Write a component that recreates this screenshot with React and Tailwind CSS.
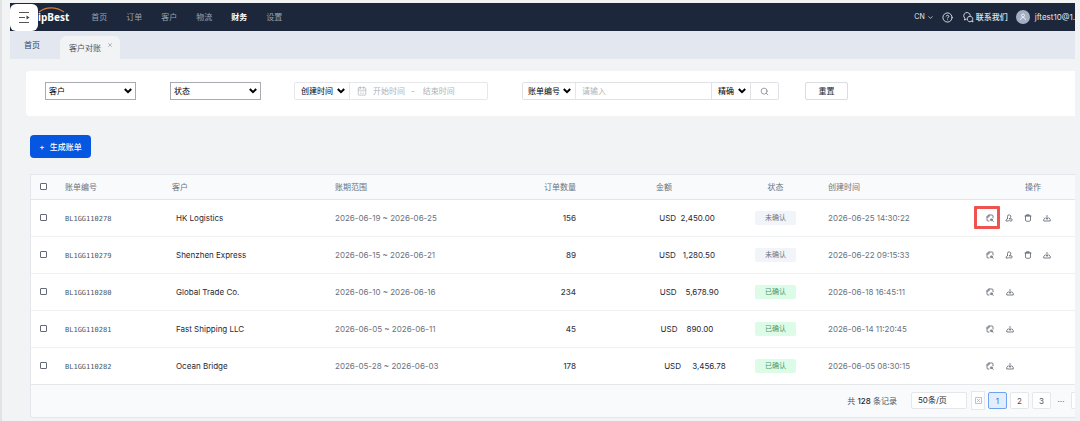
import React from "react";
import { CircleHelp, ChevronDown, Search, CalendarDays, X } from "lucide-react";

const navItems = ["首页", "订单", "客户", "物流", "财务", "设置"];

const rows = [
  { id: "BL1GG110278", customer: "HK Logistics", range: "2026-06-19 ~ 2026-06-25", count: 156, amount: "USD\u00a0\u00a02,450.00", confirmed: false, created: "2026-06-25 14:30:22", marked: true },
  { id: "BL1GG110279", customer: "Shenzhen Express", range: "2026-06-15 ~ 2026-06-21", count: 89, amount: "USD\u00a0\u00a0\u00a01,280.50", confirmed: false, created: "2026-06-22 09:15:33" },
  { id: "BL1GG110280", customer: "Global Trade Co.", range: "2026-06-10 ~ 2026-06-16", count: 234, amount: "\u00a0\u00a0USD\u00a0\u00a0\u00a0\u00a05,678.90", confirmed: true, created: "2026-06-18 16:45:11" },
  { id: "BL1GG110281", customer: "Fast Shipping LLC", range: "2026-06-05 ~ 2026-06-11", count: 45, amount: "USD\u00a0\u00a0\u00a0\u00a0890.00", confirmed: true, created: "2026-06-14 11:20:45" },
  { id: "BL1GG110282", customer: "Ocean Bridge", range: "2026-05-28 ~ 2026-06-03", count: 178, amount: "\u00a0\u00a0\u00a0\u00a0\u00a0\u00a0\u00a0USD\u00a0\u00a0\u00a0\u00a0\u00a03,456.78", confirmed: true, created: "2026-06-05 08:30:15" },
];

function Select({ label, options, className, boxClass = "" }) {
  return (
    <label className={"relative flex items-center " + className}>
      <span className="sr-only">{label}</span>
      <select className={"h-full w-full appearance-none bg-white text-[8px] leading-4 text-black outline-none " + boxClass}>
        {options.map((o) => (
          <option key={o}>{o}</option>
        ))}
      </select>
      <svg className="pointer-events-none absolute right-1 h-[6px] w-2" viewBox="0 0 8 6" fill="none" stroke="#000" strokeWidth="2">
        <path d="M.8 1 4 4.2 7.2 1" />
      </svg>
    </label>
  );
}

function Icon({ children }) {
  return (
    <svg className="size-2" viewBox="0 0 16 16" fill="none" stroke="currentColor" strokeWidth="1.500" strokeLinecap="round" strokeLinejoin="round">
      {children}
    </svg>
  );
}

const icons = {
  查看: (
    <Icon>
      <path d="M6 14H4A2 2 0 0 1 2 12V5L5 2H12A2 2 0 0 1 14 4V8M2 6H6V2" />
      <circle cx="10.500" cy="11.500" r="1.800" />
      <path d="m12.500 13 2 1.500" />
    </Icon>
  ),
  确认: (
    <Icon>
      <path d="M5 9V5a3.300 3.300 0 1 1 6 2L9 9.500M5 9 2 12.500V14h5l2-2M9 9.500h3a2.200 2.200 0 0 1 0 4.500H10" />
    </Icon>
  ),
  删除: (
    <Icon>
      <path d="M5.500 1.500h5v2h-5zM2 4h12M3 4v8a2.500 2.500 0 0 0 2.500 2.500h5A2.500 2.500 0 0 0 13 12V4" />
    </Icon>
  ),
  下载: (
    <Icon>
      <path d="M8 3v7M5.500 8 8 10.500 10.500 8M4 8 1.500 11v3h13v-3L12 8" />
    </Icon>
  ),
};

function Action({ name, marked }) {
  return (
    <button type="button" aria-label={name} className="relative flex size-2 items-center justify-center text-[#4b5563]">
      {icons[name]}
      {marked && <span className="absolute -top-2 -left-3 h-[23px] w-[26px] rounded-[1px] border-3 border-[#ef5350]" />}
    </button>
  );
}

function Check({ label }) {
  return (
    <input
      type="checkbox"
      aria-label={label}
      className="block size-[7px] appearance-none rounded-[1px] border border-[#626875] bg-white checked:bg-blue-600"
    />
  );
}

function PageButton({ children, active }) {
  return (
    <button
      type="button"
      className={
        "flex h-[17px] w-[19px] items-center justify-center rounded-xs border text-[8px] " +
        (active ? "border-[#6ea3f2] bg-[#e3edfd] text-[#2f6fe0]" : "border-[#e5e7eb] bg-white text-[#4b5563]")
      }
    >
      {children}
    </button>
  );
}

export default function App() {
  return (
    <div className="min-h-screen border-l-2 border-[#e1e3e5] bg-[#f1f3f5] pt-[3px] pr-[5px] pb-1 pl-2 font-[Inter,'Noto_Sans_CJK_SC',sans-serif] text-[8px] leading-3 text-[#4b5563]">
      <header className="flex h-7 items-center bg-[#1c273b] text-[#99a1ae]">
        <button type="button" aria-label="菜单" className="z-10 flex h-[27px] w-7 shrink-0 items-center justify-center rounded-md bg-white">
          <svg className="h-[13px] w-3" viewBox="0 0 12 13" fill="none" stroke="#555" strokeWidth="1">
            <path d="M1 1.500h10M1 6.500h6M1 11.500h10" />
            <path d="M8.500 4.500v4l3-2z" fill="#444" stroke="none" />
          </svg>
        </button>
        <div className="relative -ml-3 shrink-0 font-['Noto_Sans',sans-serif] text-[10px] font-bold text-white">
          ShipBest
          <svg className="absolute -top-1 right-1 h-[6px] w-[27px]" viewBox="0 0 27 6" fill="none" stroke="#d87935" strokeWidth="1.200">
            <path d="M1 5C8-.5 18-.5 26 5" />
          </svg>
        </div>
        <nav className="ml-[22px] flex gap-[19px]">
          {navItems.map((n) => (
            <a key={n} href="#" className={n === "财务" ? "font-bold text-white" : ""}>
              {n}
            </a>
          ))}
        </nav>
        <div className="ml-auto flex items-center whitespace-nowrap text-[#e2e6ec]">
          <button type="button" className="mr-2 flex items-center gap-[2px] text-[7px]">
            CN
            <ChevronDown size={7} strokeWidth={2.5} />
          </button>
          <button type="button" aria-label="帮助" className="mr-[10px]">
            <CircleHelp size={11} strokeWidth={2} />
          </button>
          <a href="#" className="mr-2 flex items-center gap-[2px] font-medium">
            <svg className="size-[11px]" viewBox="0 0 22 22" fill="none" stroke="currentColor" strokeWidth="1.800" strokeLinejoin="round">
              <path d="M7 14.500 3 16l.8-3.500A6.500 6.500 0 1 1 14.500 7.500" />
              <path d="M14 8.500a5.500 5.500 0 1 1-2.500 10.400 5.500 5.500 0 0 1 2.500-10.400M17.500 18.500l2.500 1.500-.6-3" />
            </svg>
            联系我们
          </a>
          <span className="mr-[5px] flex size-[14px] items-center justify-center rounded-full bg-[#a3aec3]">
            <svg className="size-2" viewBox="0 0 16 16" fill="none" stroke="#fff" strokeWidth="1.500">
              <circle cx="8" cy="5" r="3" />
              <path d="M3 14c0-3 2-5 5-5s5 2 5 5" />
            </svg>
          </span>
          <span>jftest10@1.</span>
        </div>
      </header>

      <div className="flex h-7 bg-[#e2e7f0]">
        <a href="#" className="flex w-[50px] items-center pl-[14px] text-[#374151]">
          首页
        </a>
        <div className="mt-[5px] flex w-[60px] items-start rounded-t-md bg-[#f1f3f5] pl-[9px]">
          <a href="#" className="mt-[6px] text-[#4b5563]">
            客户对账
          </a>
          <button type="button" aria-label="关闭" className="mt-[6px] ml-[6px] text-[#8b919b]">
            <X size={6} strokeWidth={2.5} />
          </button>
        </div>
      </div>

      <form className="mt-3 ml-4 flex h-[45px] items-start rounded-l-sm bg-white pt-[11px] pl-[19px]">
        <Select label="客户" options={["客户"]} className="h-[18px] w-[91px]" boxClass="border border-[#a8abb0] pl-[3px]" />
        <Select label="状态" options={["状态"]} className="ml-[34px] h-[18px] w-[91px]" boxClass="border border-[#a8abb0] pl-[3px]" />
        <div className="ml-[33px] flex h-[18px] w-[194px] rounded-xs border border-[#e5e7eb]">
          <Select label="时间类型" options={["创建时间"]} className="w-[55px] border-r border-[#e5e7eb]" boxClass="pl-[6px]" />
          <div className="flex items-center pl-[7px] text-[#a4a8ae]">
            <CalendarDays size={10} strokeWidth={1.5} />
            <input aria-label="开始时间" placeholder="开始时间" className="ml-[6px] w-[38px] outline-none placeholder:text-[#b0b3b8]" />
            -
            <input aria-label="结束时间" placeholder="结束时间" className="ml-2 w-[38px] outline-none placeholder:text-[#b0b3b8]" />
          </div>
        </div>
        <div className="ml-[34px] flex h-[18px] w-[257px] rounded-xs border border-[#e0e2e6]">
          <Select label="编号类型" options={["账单编号"]} className="w-[53px] border-r border-[#e5e7eb]" boxClass="pl-[5px]" />
          <input aria-label="编号" placeholder="请输入" className="min-w-0 flex-1 pl-[6px] outline-none placeholder:text-[#b0b3b8]" />
          <Select label="匹配方式" options={["精确"]} className="w-10 border-x border-[#e0e2e6]" boxClass="pl-[6px]" />
          <button type="button" aria-label="搜索" className="flex w-[27px] items-center justify-center text-[#7c8087]">
            <Search size={9} strokeWidth={2} />
          </button>
        </div>
        <button type="reset" className="ml-[26px] h-[18px] w-[43px] rounded-xs border border-[#d9dce0] text-[#1f2937]">
          重置
        </button>
      </form>

      <button type="button" className="mt-[19px] ml-5 flex h-[23px] w-[61px] items-center justify-center gap-[5px] rounded-[4px] bg-[#0556e0] font-medium text-white">
        <span>+</span>
        <span>生成账单</span>
      </button>

      <section className="mt-4 ml-5 overflow-hidden rounded-bl-sm border-y border-l border-[#e3e6ea] bg-white">
        <table className="w-full table-fixed text-left">
          <colgroup>
            <col className="w-[34px]" />
            <col className="w-[107px]" />
            <col className="w-[163px]" />
            <col className="w-[154px]" />
            <col className="w-[87px]" />
            <col className="w-[158px]" />
            <col className="w-[94px]" />
            <col className="w-[125px]" />
            <col />
          </colgroup>
          <thead>
            <tr className="h-6 border-b border-[#e1e5ea] bg-[#f9fafb] text-[#6b7280]">
              <th className="pl-[9px]"><Check label="全选" /></th>
              <th className="font-normal">账单编号</th>
              <th className="font-normal">客户</th>
              <th className="font-normal">账期范围</th>
              <th className="text-right font-normal">订单数量</th>
              <th className="pl-20 font-normal">金额</th>
              <th className="pr-[11px] text-center font-normal">状态</th>
              <th className="font-normal">创建时间</th>
              <th className="pr-[34px] text-right font-normal">操作</th>
            </tr>
          </thead>
          <tbody>
            {rows.map((r) => (
              <tr key={r.id} className="h-[37px] border-b border-[#eff1f3] last:border-[#e5e7eb]">
                <td className="pl-[9px]"><Check label={r.id} /></td>
                <td className="pt-[2px] font-['DejaVu_Sans_Mono',monospace] text-[7px] text-[#4b5563]">{r.id}</td>
                <td className="pl-1 text-[#1f2937]">{r.customer}</td>
                <td className="whitespace-nowrap text-[#6b7280]">{r.range}</td>
                <td className="text-right font-medium text-[#374151]">{r.count}</td>
                <td className="pl-[64px] text-center whitespace-nowrap text-[#1f2937]">{r.amount}</td>
                <td className="pr-[11px]">
                  <span
                    className={
                      "mx-auto flex h-[14px] w-[41px] items-center justify-center rounded-xs text-[7px] " +
                      (r.confirmed ? "bg-[#dcfce7] text-[#4b9568]" : "bg-[#f1f4f8] text-[#6b7280]")
                    }
                  >
                    {r.confirmed ? "已确认" : "未确认"}
                  </span>
                </td>
                <td className="whitespace-nowrap text-[#6b7280]">{r.created}</td>
                <td>
                  <div className={"flex pl-[33px] " + (r.confirmed ? "gap-3" : "gap-[11px]")}>
                    <Action name="查看" marked={r.marked} />
                    {!r.confirmed && <Action name="确认" />}
                    {!r.confirmed && <Action name="删除" />}
                    <Action name="下载" />
                  </div>
                </td>
              </tr>
            ))}
          </tbody>
        </table>
        <footer className="flex h-8 items-center justify-end overflow-hidden bg-[#f9fafb]">
          <p className="mr-[14px] whitespace-nowrap">
            共 <span className="font-medium text-[#1f2937]">128</span> 条记录
          </p>
          <label className="mr-1 flex">
            <span className="sr-only">每页条数</span>
            <select className="h-[17px] w-[56px] appearance-none rounded-xs border border-[#e5e7eb] bg-white pl-[6px] text-[8px] leading-[15px] text-[#1f2937]">
              <option>50条/页</option>
            </select>
          </label>
          <div className="flex items-center gap-[3px]">
            <button type="button" aria-label="上一页" className="flex h-[19px] w-[14px] items-center justify-center border border-[#e5e7eb] bg-white text-[#a8adb5]">
              <svg className="size-[7px]" viewBox="0 0 14 14" fill="none" stroke="currentColor" strokeWidth="1.500">
                <path d="M1 1h12v12H1zM4 4l6 6M10 4 4 10" />
              </svg>
            </button>
            <PageButton active>1</PageButton>
            <PageButton>2</PageButton>
            <PageButton>3</PageButton>
            <span className="w-[14px] text-center">···</span>
            <button type="button" aria-label="下一页" className="h-[17px] w-1 rounded-l-xs border-y border-l border-[#e5e7eb] bg-white" />
          </div>
        </footer>
      </section>
    </div>
  );
}
